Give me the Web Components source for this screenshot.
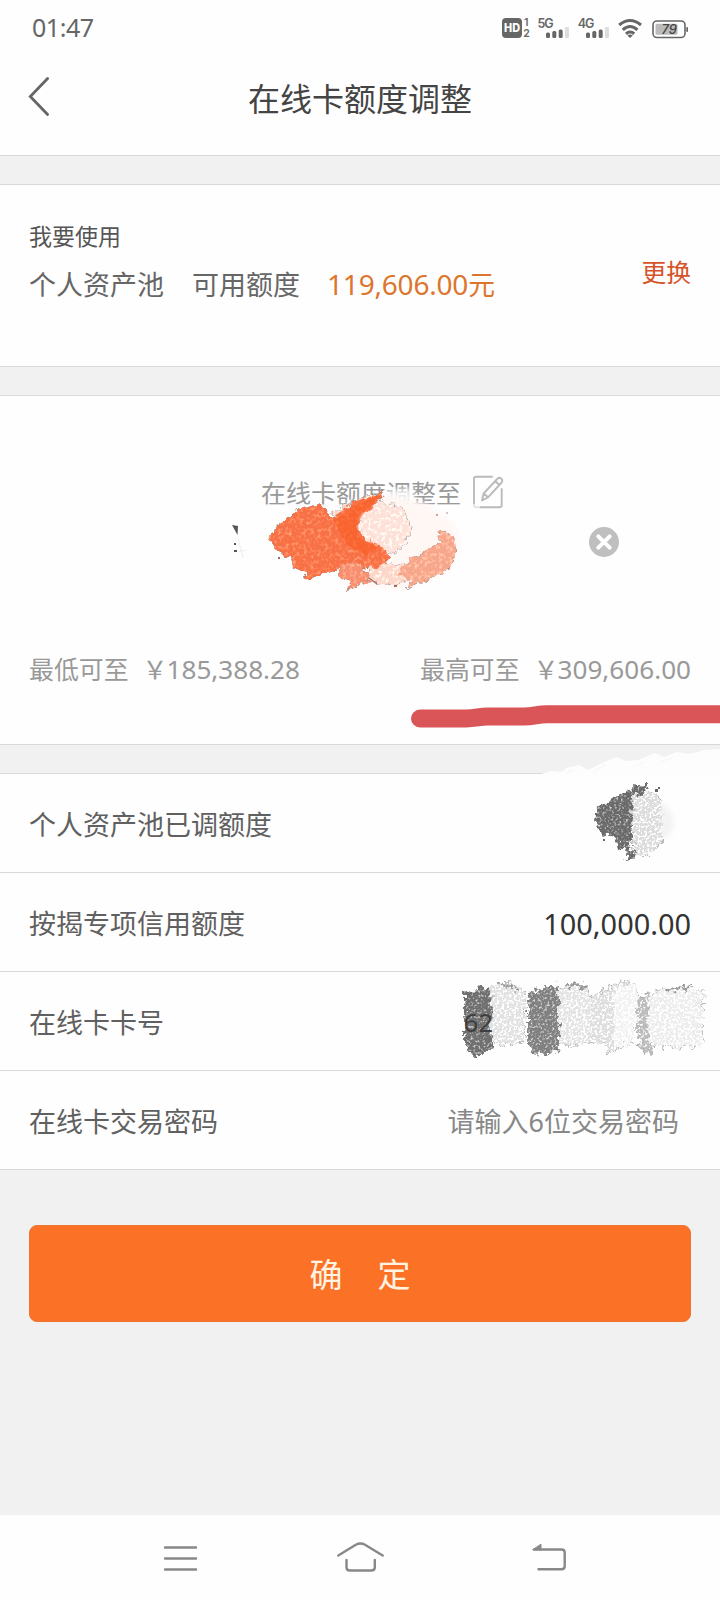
<!DOCTYPE html>
<html lang="zh-CN">
<head>
<meta charset="utf-8">
<title>在线卡额度调整</title>
<style>
html,body{margin:0;padding:0;background:#f1f1f1}
body{width:720px;height:1600px;overflow:hidden;font-family:"Noto Sans","Noto Sans CJK SC",sans-serif}
</style>
</head>
<body>
<limit-page></limit-page>
<script>
const define = (name, html) => customElements.define(name, class extends HTMLElement {
  constructor() {
    super();
    const t = document.createElement('template');
    t.innerHTML = html;
    this.attachShadow({mode: 'open'}).append(t.content.cloneNode(true));
  }
});

define('status-bar', `
<style>
:host{display:flex;height:56px;box-sizing:border-box;padding:0 31px 0 32px;align-items:center;justify-content:space-between;color:#666}
time{font-size:25px;line-height:55px;letter-spacing:-.45px;margin-top:-1px}
svg{display:block}
</style>
<time>01:47</time>
<svg width="190" height="40" viewBox="499 8 190 40" fill="#666" font-family="Inter, sans-serif" font-weight="600">
  <rect x="502" y="18" width="20" height="20" rx="4"/>
  <text x="504" y="32.2" font-size="11.5" font-weight="800" fill="#fff" textLength="16" lengthAdjust="spacingAndGlyphs">HD</text>
  <text x="524" y="26" font-size="10.5">1</text>
  <text x="523.2" y="37.4" font-size="10.5">2</text>
  <text x="537.5" y="27.8" font-size="12.5" textLength="16">5G</text>
  <g><rect x="546" y="32.5" width="4" height="5.5" rx="1.5"/><rect x="552.3" y="31" width="4" height="7" rx="1.5"/><rect x="558.7" y="29.5" width="4" height="8.5" rx="1.5"/><rect x="565" y="27" width="4" height="11" rx="1" fill="#ddd"/></g>
  <text x="577.8" y="27.8" font-size="12.5" textLength="16.5">4G</text>
  <g transform="translate(40 0)"><rect x="546" y="32.5" width="4" height="5.5" rx="1.5"/><rect x="552.3" y="31" width="4" height="7" rx="1.5"/><rect x="558.7" y="29.5" width="4" height="8.5" rx="1.5"/><rect x="565" y="27" width="4" height="11" rx="1" fill="#ddd"/></g>
  <path d="M619.2 25Q630 16 641 25M622.8 29.8Q630 23.2 637.4 29.8M626 33.8Q630 30.2 634.2 33.8" fill="none" stroke="#666" stroke-width="3.1"/>
  <path d="M627.4 35.4Q630 33.4 632.8 35.4L630 38z"/>
  <rect x="653" y="21" width="32" height="16.5" rx="4" fill="#fff" stroke="#666" stroke-width="1.6"/>
  <rect x="655.5" y="23.7" width="22" height="11" rx="1.5" fill="#bbb"/>
  <rect x="686.3" y="27" width="1.7" height="5" rx=".8"/>
  <text x="661.5" y="34" font-size="13" font-style="italic" font-weight="500" fill="#444" textLength="15.5">79</text>
</svg>`);

define('title-bar', `
<style>
:host{display:grid;grid-template-columns:72px 1fr 72px;height:99px;align-items:start;color:#444}
svg{display:block;margin:19px 0 0 27px}
h1{margin:19px 0 0;font-weight:400;font-size:32px;line-height:48px;text-align:center;white-space:nowrap}
</style>
<svg width="26" height="44" viewBox="27 75 26 44"><path d="M47.6 78.5L30.3 96.5L47.6 114.5" fill="none" stroke="#666" stroke-width="2.8" stroke-linecap="round"/></svg>
<h1><slot></slot></h1>`);

define('page-card', `
<style>:host{display:block;box-sizing:border-box;background:#fefefe;border-top:1px solid #d6dad9;border-bottom:1px solid #d6dad9}</style>
<slot></slot>`);

define('asset-pool', `
<style>
:host{display:flex;justify-content:space-between;height:181px;padding:0 29px;color:#666}
.small{font-size:23px;line-height:34px;margin-top:34px;color:#555}
.line{display:flex;align-items:baseline;font-size:27px;line-height:40px;margin-top:11px;white-space:nowrap}
.line b{font-weight:400}
.line b+b{margin-left:28px}
.line .sum{color:#dc762f;letter-spacing:-.2px;font-size:28px;margin-left:27px}
.sum span{font-size:26.8px}
a{font-size:24.8px;line-height:36px;margin-top:69px;color:#d65327}
</style>
<div><div class="small">我要使用</div><div class="line"><b>个人资产池</b><b>可用额度</b><b class="sum">119,606.00<span>元</span></b></div></div>
<a>更换</a>`);

define('limit-editor', `
<style>
:host{display:flex;flex-direction:column;height:348px;color:#999}
.head{display:flex;align-items:center;margin:76px 0 0 261px;height:40px;gap:11px;font-size:25px;white-space:nowrap}
.amount{display:flex;justify-content:flex-end;margin:15px 101px 0 0}
.range{display:flex;justify-content:space-between;margin:93px 29px 0;line-height:38px;font-size:24.9px;white-space:nowrap}
.range span{display:flex;align-items:baseline}
.range i{font-style:normal;font-size:25px;width:25px;margin-left:14px}
.range b{font-weight:400;font-size:26.1px;margin-left:-1px}
svg{display:block}
</style>
<div class="head"><span>在线卡额度调整至</span>
<svg width="32" height="34" viewBox="472 475 32 34" fill="none" stroke="#bbb" stroke-width="1.9" stroke-linecap="round" stroke-linejoin="round"><path d="M492 476.8H476Q474 476.8 474 479V505Q474 507.2 476 507.2H499.5Q501.7 507.2 501.7 505V489"/><path d="M482 500.5L483.6 493.5L497.2 479Q499.5 476.8 501.5 478.8Q503.2 480.8 501.2 483L488 497.4ZM483.8 493.5L488 497.3M495.4 481.2L499.3 485"/></svg></div>
<div class="amount"><svg width="30" height="30" viewBox="0 0 30 30"><circle cx="15" cy="15" r="15" fill="#bfbfbf"/><path d="M9.3 9.3L20.7 20.7M20.7 9.3L9.3 20.7" stroke="#fff" stroke-width="4" stroke-linecap="round"/></svg></div>
<div class="range"><span>最低可至<i>￥</i><b>185,388.28</b></span><span>最高可至<i>￥</i><b>309,606.00</b></span></div>`);

define('info-row', `
<style>
:host{display:flex;box-sizing:border-box;height:99px;padding:0 29px;align-items:center;justify-content:space-between;border-bottom:1px solid #d6dad9;font-size:27px;line-height:40px;color:#606060;white-space:nowrap}
:host(:last-child){border-bottom:0;height:98px}
::slotted([slot=value]){font-size:28.9px;color:#333}
::slotted([slot=hint]){color:#888;margin-right:12px}
div{padding-top:4px}
</style>
<div><slot></slot></div><div><slot name="value"></slot><slot name="hint"></slot></div>`);

define('confirm-button', `
<style>
:host{display:block;margin:55px 29px 0}
button{display:block;width:100%;height:97px;border:1px solid #ed7430;border-radius:8px;background:#fb7126;color:#fff3e2;font:400 33px/95px "Noto Sans CJK SC",sans-serif;padding:0 0 4px}
span{display:flex;justify-content:center;gap:35px}
i{font-style:normal}
</style>
<button><span><i>确</i><i>定</i></span></button>`);

define('nav-bar', `
<style>
:host{display:grid;grid-template-columns:repeat(3,40px);justify-content:center;column-gap:145px;height:85px;background:#fefefe;align-items:start}
svg{display:block;overflow:visible;margin-top:25px}
</style>
<svg width="40" height="36" viewBox="155 1540 40 36" stroke="#888" stroke-width="2.4" stroke-linecap="round"><path d="M165 1547.5H196M165 1558.5H196M165 1569.5H196"/></svg>
<svg width="40" height="36" viewBox="340 1540 40 36" fill="none" stroke="#888" stroke-width="2.4" stroke-linecap="round" stroke-linejoin="round"><path d="M338.3 1555.5L355.8 1544.7Q360.5 1542.2 365 1544.7L382.7 1555.5M346.5 1560V1567.5Q346.5 1570.5 350 1570.5H371.2Q374.8 1570.5 374.8 1567.5V1560"/></svg>
<svg width="40" height="36" viewBox="525 1540 40 36" fill="none" stroke="#888" stroke-width="2.4" stroke-linecap="round" stroke-linejoin="round"><path d="M534 1549.5H561.5Q564.7 1549.5 564.7 1552.7V1566.3Q564.7 1569.3 561.5 1569.3H538.5"/><path d="M533 1549.5L541 1544.2V1549.5Z" fill="#888" stroke-width="1"/></svg>`);

/* Free-hand marker and privacy smudges drawn over the form. */
define('marker-layer', `
<style>:host{position:absolute;inset:0;pointer-events:none}svg{display:block}</style>
<svg width="720" height="1600" viewBox="0 0 720 1600">
<defs>
<filter id="grain" x="-10%" y="-10%" width="120%" height="120%" color-interpolation-filters="sRGB">
 <feTurbulence type="fractalNoise" baseFrequency=".15" numOctaves="2" seed="4" result="n"/>
 <feDisplacementMap in="SourceGraphic" in2="n" scale="9" xChannelSelector="R" yChannelSelector="G" result="d"/>
 <feTurbulence type="fractalNoise" baseFrequency=".28" numOctaves="2" seed="9"/>
 <feColorMatrix values="1 0 0 0 -.5  1 0 0 0 -.5  1 0 0 0 -.5  0 0 0 0 1" result="g"/>
 <feComposite in="d" in2="g" operator="arithmetic" k2="1" k3=".6" k4="0" result="c"/>
 <feComposite in="c" in2="d" operator="in"/>
</filter>
<filter id="coarse" x="-10%" y="-10%" width="120%" height="120%" color-interpolation-filters="sRGB">
 <feTurbulence type="fractalNoise" baseFrequency=".18" numOctaves="2" seed="7" result="n"/>
 <feDisplacementMap in="SourceGraphic" in2="n" scale="12" xChannelSelector="R" yChannelSelector="G" result="d"/>
 <feTurbulence type="fractalNoise" baseFrequency=".42" numOctaves="2" seed="2"/>
 <feColorMatrix values="1.3 0 0 0 -.66  1.3 0 0 0 -.66  1.3 0 0 0 -.66  0 0 0 0 1" result="g"/>
 <feComposite in="d" in2="g" operator="arithmetic" k2="1" k3="1" result="c"/>
 <feComposite in="c" in2="d" operator="in"/>
</filter>
<filter id="soft" x="-20%" y="-20%" width="140%" height="140%"><feGaussianBlur stdDeviation="2.5"/></filter>
<filter id="edge" filterUnits="userSpaceOnUse" x="200" y="480" width="520" height="260"><feGaussianBlur stdDeviation=".6"/></filter>
</defs>

<path d="M374 501L388 490L414 488L414 506H340V503Z" fill="#fefefe" opacity=".8" filter="url(#soft)"/>
<path d="M260 504H480V512H260Z" fill="#fefefe" opacity=".6"/>
<path d="M350 508L385 495L425 503L455 525L461 548L445 574L400 590L340 582Z" fill="#fff7f4" filter="url(#soft)"/>
<g filter="url(#grain)">
 <path d="M331 513L362 497L378 493L350 520Z" fill="#fdd8cb"/>
 <path d="M360 514L380 501L403 508L412 528L402 548L386 556L362 540Z" fill="#fde0d7"/>
 <path d="M366 575L372 560L402 564L412 580L388 585L370 583Z" fill="#fcd6c9"/>
 <path d="M270 540L275 526L297 511L320 503L332 517L351 503L384 492L377 503L361 515L357 525L365 540L380 543L390 557L383 566L367 568L353 561L340 567L320 576L303 580L308 572L293 567L290 557L277 550Z" fill="#f77146"/>
 <path d="M340 566L356 560L367 573L368 581L347 592L352 582L338 575Z" fill="#f58e6e"/>
 <path d="M400 571L403 564L438 543L440 528L456 540L457 557L440 575L405 589L413 581L397 576Z" fill="#f6a68b"/>
</g>
<path d="M333 520Q344 516 354 505L382 494L374 503Q361 514 358 524L360 538L378 548L366 556L346 544Z" fill="#fa5b20" opacity=".6" filter="url(#edge)"/>
<g fill="#555"><path d="M232 525L238 526L237.5 535Z"/><rect x="234" y="543" width="2" height="2"/><rect x="234" y="550" width="3" height="2"/></g>
<path d="M238 538L243 558M238 552L246 550" stroke="#eee" fill="none"/>
<g fill="#a86857"><rect x="278" y="557" width="2" height="2"/><rect x="394" y="585" width="3" height="2"/><rect x="436" y="514" width="2" height="2" opacity=".6"/><rect x="446" y="512" width="2" height="2" opacity=".4"/><rect x="448" y="568" width="2" height="2" opacity=".5"/><path d="M369 578L377 584" stroke="#a86857" stroke-width="1.2"/></g>

<path d="M420 718.5H466C476 718.5 479 716.5 488 716.5H524C534 716.5 537 714.2 547 714.2H735" fill="none" stroke="#d95459" stroke-width="18" stroke-linecap="round" filter="url(#edge)"/>

<path d="M541 774L551 771L562 772L566 768L579 765L588 770L600 764L617 757L626 761L638 760L655 753L664 757L677 752L690 754L704 750L720 749V776H541Z" fill="#fdfdfd"/>
<path d="M566 773L574 770M594 771L606 765M632 767L644 762M660 762L672 758" stroke="#f8f8f8" stroke-width="1.5"/>

<path d="M656 799L670 810L674 822L670 836L654 841Z" fill="#f3f3f3" filter="url(#soft)"/>
<g filter="url(#coarse)">
 <path d="M594 820L600 806L637 785L648 785L644 793L632 799V850L636 855L626 862L628 852L619 848L616 837L603 834Z" fill="#6a6a6a"/>
 <path d="M632 797L651 790L662 801V842L645 858L634 854Z" fill="#dcdcdc"/>
</g>
<path d="M606 827h2v2h-2zM603 839h2v2h-2zM655 789h3v3h-3zM658 787h2v2h-2z" fill="#666"/>

<g filter="url(#coarse)">
 <path d="M584 1000L628 979L632 1000L616 1052L605 1054L610 1044L584 1042Z" fill="#dedede"/>
 <path d="M614 988L635 984L640 1003L632 1044L614 1048Z" fill="#f2f2f2"/>
 <path d="M465 993L476 990L490 986L492 1050L482 1055H472L465 1044Z" fill="#6f6f6f"/>
 <path d="M491 987L508 983L520 986L526 997L524 1043L508 1045L492 1042Z" fill="#e2e2e2"/>
 <path d="M528 993L540 989L560 985L559 1050L547 1055H536L528 1044Z" fill="#808080"/>
 <path d="M559 989L574 984L588 989L592 1002L588 1041L572 1046L559 1043Z" fill="#e4e4e4"/>
 <path d="M638 998L649 992L652 1054L645 1054L638 1044Z" fill="#bbb"/>
 <path d="M648 995L670 987L691 987L704 992L702 1046L675 1048L649 1045Z" fill="#ededed"/>
 <path d="M498 984L514 987L518 990M563 986L580 985L584 990M665 991L674 989L690 987" fill="none" stroke="#999" stroke-width="3"/>
</g>
<text x="463.5" y="1032" font-family="Noto Sans" font-size="26" fill="#3e3e3e">62</text>
</svg>`);

define('limit-page', `
<style>
:host{display:flex;flex-direction:column;position:relative;width:720px;height:1600px;background:#f1f1f1}
header{background:#fefefe;border-bottom:1px solid #d6dad9;height:155px}
page-card{margin-top:28px}
nav-bar{margin-top:auto}
</style>
<header><status-bar></status-bar><title-bar>在线卡额度调整</title-bar></header>
<page-card><asset-pool></asset-pool></page-card>
<page-card><limit-editor></limit-editor></page-card>
<page-card>
<info-row>个人资产池已调额度</info-row>
<info-row>按揭专项信用额度<span slot="value">100,000.00</span></info-row>
<info-row>在线卡卡号</info-row>
<info-row>在线卡交易密码<span slot="hint">请输入6位交易密码</span></info-row>
</page-card>
<confirm-button></confirm-button>
<nav-bar></nav-bar>
<marker-layer></marker-layer>`);
</script>
</body>
</html>
